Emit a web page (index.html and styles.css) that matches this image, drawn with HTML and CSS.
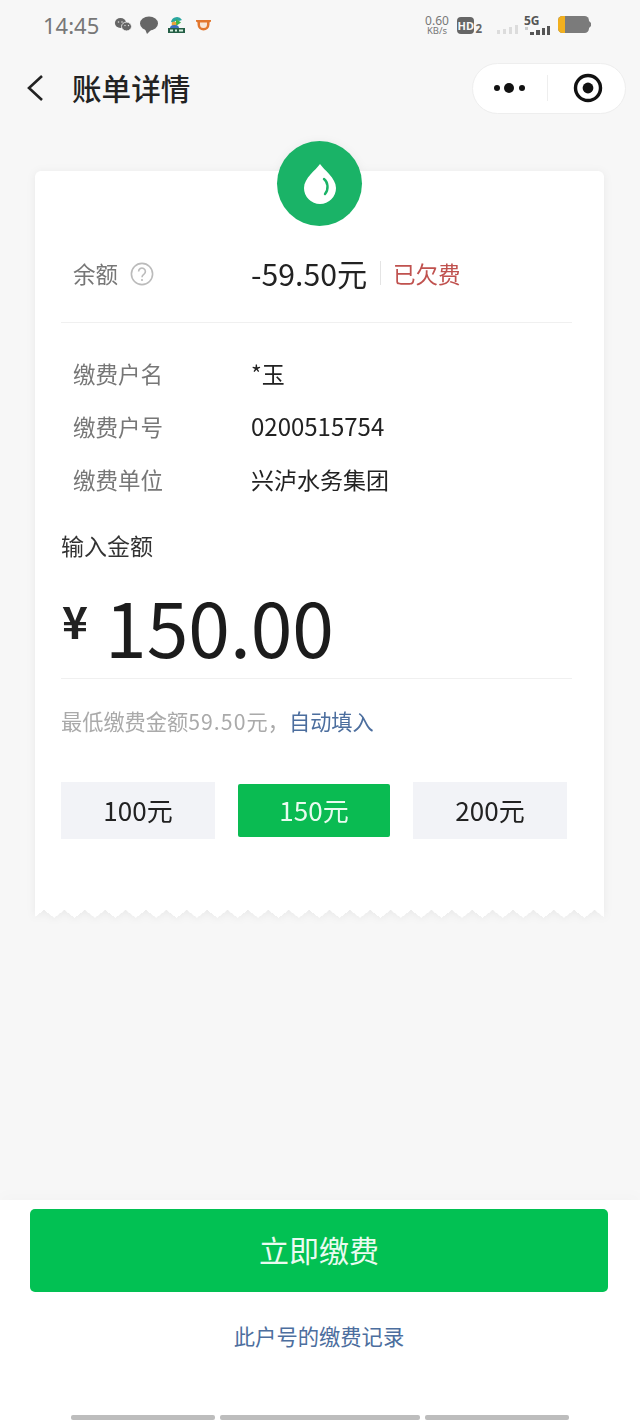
FILE: index.html

```html
<!DOCTYPE html>
<html lang="zh-CN">
<head>
  <meta charset="UTF-8">
  <meta name="viewport" content="width=device-width, initial-scale=1.0">
  <title>账单详情</title>
  <link rel="stylesheet" href="styles.css">
</head>
<body>
  <div class="statusbar">
    <div class="status-left">
      <span class="time">14:45</span>
      <svg class="notify" width="100" height="20" viewBox="0 0 100 20">
        <!-- wechat -->
        <ellipse cx="6.5" cy="8" rx="5.6" ry="5" fill="#666"/>
        <ellipse cx="12.5" cy="11.5" rx="5" ry="4.4" fill="#666" stroke="#f7f7f7" stroke-width=".8"/>
        <circle cx="4.5" cy="7" r=".8" fill="#ddd"/>
        <circle cx="8" cy="7" r=".8" fill="#ddd"/>
        <circle cx="11" cy="10.5" r=".7" fill="#ddd"/>
        <circle cx="14.5" cy="10.5" r=".7" fill="#ddd"/>
        <!-- chat bubble -->
        <ellipse cx="35" cy="8.5" rx="9" ry="7" fill="#666"/>
        <path d="M31 14l2 5 4-4z" fill="#666"/>
        <!-- video app -->
        <path d="M57 7a6 6 0 0 1 11-2l-3 1a3.500 3.500 0 0 0-5 2z" fill="#2aa6a0"/>
        <path d="M62 4l5 3.500-5 3.500z" fill="#3bb54a"/>
        <circle cx="60" cy="9" r="2.400" fill="#e8a33a"/>
        <path d="M56 13a4.500 3 0 0 1 9 0z" fill="#3a6fc0"/>
        <path d="M54 13h17v5H54z" fill="#245f46"/>
        <path d="M56 14.500h3v2h-3zM61 14.500h2v2h-2zM65 14.500h4v2h-4z" fill="#d8efe0"/>
        <!-- orange app -->
        <path d="M82 5h15v1.500l-1.500 1v2a6 6 0 0 1-12 0v-2l-1.500-1z" fill="#e2772f"/>
        <path d="M86 7.500h7v2a3.500 3.500 0 0 1-7 0z" fill="#f9e7d8"/>
      </svg>
    </div>
    <div class="status-right">
      <div class="speed"><span>0.60</span><span class="speed-unit">KB/s</span></div>
      <div class="hd"><span class="hd-box">HD</span><span class="hd-sub">2</span></div>
      <svg class="signal" width="22" height="9" viewBox="0 0 22 9">
        <path d="M0 5h3v4H0zM6 4h3v5H6zM12 2h3v7h-3zM18 0h3v9h-3z" fill="#dcdcdc"/>
      </svg>
      <div class="net">
        <span class="net-label">5G</span>
        <svg width="27" height="9" viewBox="0 0 27 9">
          <path d="M1 1h3v3H1z" fill="#ccc"/>
          <path d="M6 6h4v3H6zM12 4h4v5h-4zM18 2h3v7h-3zM23 0h3v9h-3z" fill="#555"/>
        </svg>
      </div>
      <svg class="battery" width="33" height="18" viewBox="0 0 33 18">
        <rect x="0" y="0" width="31" height="17" rx="4.500" fill="#7b7b7b"/>
        <path d="M4.500 0H7v17H4.500A4.500 4.500 0 0 1 0 12.500v-8A4.500 4.500 0 0 1 4.500 0z" fill="#f2b01e"/>
        <path d="M31 5l2 2v3l-2 2z" fill="#7b7b7b"/>
      </svg>
    </div>
  </div>

  <div class="navbar">
    <svg class="back" width="18" height="28" viewBox="0 0 18 28">
      <path d="M16 2L3 14l13 12" fill="none" stroke="#222" stroke-width="2.600"/>
    </svg>
    <h1 class="nav-title">账单详情</h1>
    <div class="capsule">
      <div class="capsule-item">
        <svg width="34" height="12" viewBox="0 0 34 12">
          <circle cx="4" cy="6" r="3" fill="#111"/>
          <circle cx="16" cy="6" r="5" fill="#111"/>
          <circle cx="29" cy="6" r="3" fill="#111"/>
        </svg>
      </div>
      <div class="capsule-item capsule-scan">
        <svg width="30" height="30" viewBox="0 0 30 30">
          <circle cx="15" cy="15" r="12.500" fill="none" stroke="#111" stroke-width="3.400"/>
          <circle cx="15" cy="15" r="5.400" fill="#111"/>
        </svg>
      </div>
    </div>
  </div>

  <div class="bill">
    <div class="bill-badge">
      <svg width="32" height="40" viewBox="0 0 32 40">
        <path d="M16 0C12 6 0 14 0 24a16 16 0 0 0 32 0C32 14 20 6 16 0z" fill="#fff"/>
        <path d="M20 15c4 3 5 10 1 15" fill="none" stroke="#1ab367" stroke-width="2.400" stroke-linecap="round"/>
      </svg>
    </div>
    <div class="bill-body">
      <div class="balance">
        <div class="label label-help">余额
          <svg class="help-icon" width="24" height="24" viewBox="0 0 24 24">
            <circle cx="12" cy="12" r="10.600" fill="none" stroke="#bbb" stroke-width="1.600"/>
            <path d="M8.600 9.400a3.400 3.400 0 1 1 5.400 2.800c-1.200.8-2 1.400-2 3" fill="none" stroke="#bbb" stroke-width="1.600"/>
            <circle cx="12" cy="18" r="1.100" fill="#bbb"/>
          </svg>
        </div>
        <div class="balance-value">-59.50元</div>
        <div class="balance-state">已欠费</div>
      </div>

      <div class="details">
        <div class="detail-row"><span class="label">缴费户名</span><span class="value">*玉</span></div>
        <div class="detail-row"><span class="label">缴费户号</span><span class="value value-num">0200515754</span></div>
        <div class="detail-row"><span class="label">缴费单位</span><span class="value">兴泸水务集团</span></div>
      </div>

      <div class="input-title">输入金额</div>
      <div class="amount">
        <span class="amount-yen">¥</span>
        <span class="amount-num">150.00</span>
      </div>
      <div class="hint">最低缴费金额<span class="hint-num">59.50</span>元，<span class="link">自动填入</span></div>

      <div class="chips">
        <div class="chip">100元</div>
        <div class="chip chip-on">150元</div>
        <div class="chip">200元</div>
      </div>
    </div>
    <div class="bill-edge"></div>
  </div>

  <div class="footer">
    <button class="pay-btn">立即缴费</button>
    <div class="record link">此户号的缴费记录</div>
    <div class="home-bars">
      <span class="home-bar"></span>
      <span class="home-bar home-bar-mid"></span>
      <span class="home-bar"></span>
    </div>
  </div>
</body>
</html>
```

FILE: styles.css

```css
* { box-sizing: border-box; }
html, body { height: 100%; }
body {
  margin: 0;
  height: 1422px;
  display: flex;
  flex-direction: column;
  background: #f7f7f7;
  color: #222;
  font-family: "Noto Sans CJK SC", "Noto Sans", sans-serif;
  overflow: hidden;
}

/* status bar */
.statusbar {
  height: 50px;
  padding: 0 49px 0 43px;
  display: flex;
  justify-content: space-between;
  align-items: center;
  color: #777;
}
.status-left { display: flex; align-items: center; gap: 15px; }
.time { font-family: "Noto Sans", sans-serif; font-size: 22px; }
.notify { display: block; }
.status-right { display: flex; align-items: center; }
.speed {
  width: 24px;
  display: flex;
  flex-direction: column;
  align-items: center;
  font-size: 12px;
  line-height: 11px;
  color: #777;
  font-family: "Noto Sans", sans-serif;
}
.speed-unit { font-size: 9.5px; line-height: 9px; }
.hd { width: 25px; margin-left: 8px; display: flex; align-items: flex-end; }
.hd-box {
  width: 18px;
  height: 17px;
  background: #666;
  color: #f7f7f7;
  border-radius: 4px;
  font-size: 11px;
  line-height: 17px;
  font-weight: 700;
  text-align: center;
  font-family: "Noto Sans", sans-serif;
}
.hd-sub { font-size: 11.5px; line-height: 11px; font-weight: 700; color: #666; margin-left: 1px; font-family: "Noto Sans", sans-serif; }
.signal { margin: 9px 0 0 15px; }
.net { width: 27px; margin-left: 5px; display: flex; flex-direction: column; align-items: flex-start; }
.net-label { font-size: 12px; line-height: 10px; font-weight: 700; color: #555; font-family: "Noto Sans", sans-serif; }
.battery { margin-left: 7px; }

/* nav */
.navbar {
  height: 76px;
  padding: 0 14px 0 26px;
  display: flex;
  align-items: center;
}
.nav-title { margin: -2px 0 0 28px; font-size: 29.6px; font-weight: 500; color: #222; }
.capsule {
  margin-left: auto;
  width: 154px;
  height: 51px;
  display: flex;
  align-items: center;
  background: #fff;
  border: 1px solid #eee;
  border-radius: 26px;
}
.capsule-item { flex: 1; display: flex; justify-content: center; align-items: center; }
.capsule-scan { height: 26px; padding-left: 3px; border-left: 1px solid #eee; }

/* bill card */
.bill {
  position: relative;
  margin: 45px 36px 0 35px;
  filter: drop-shadow(0 1px 4px rgba(0, 0, 0, 0.06));
}
.bill-badge {
  position: absolute;
  left: 242px;
  top: -30px;
  width: 85px;
  height: 85px;
  border-radius: 50%;
  background: #1ab367;
  display: flex;
  align-items: center;
  justify-content: center;
}
.bill-body {
  background: #fff;
  border-radius: 6px 6px 0 0;
  padding: 77px 32px 71px 26px;
}
/* receipt teeth along the bottom */
.bill-edge {
  height: 8px;
  background: conic-gradient(from -51.5deg at 50% 100%, #fff 103deg, transparent 0) 9px 0 / 20.4px 8px repeat-x;
}

.label { color: #777; font-size: 22.5px; width: 178px; flex-shrink: 0; }
.balance {
  height: 75px;
  padding: 0 0 25px 12px;
  display: flex;
  align-items: center;
  border-bottom: 1px solid #f0f0f0;
}
.label-help { display: flex; align-items: center; gap: 12px; }
.help-icon { margin-top: 3px; }
.balance-value { font-size: 30.2px; color: #222; }
.balance-state {
  margin-left: 13px;
  padding-left: 12px;
  border-left: 1px solid #e4e4e4;
  font-size: 22.5px;
  line-height: 24px;
  color: #c0524f;
}

.details { padding: 23px 0 0 12px; }
.detail-row { height: 53px; display: flex; align-items: center; }
.value { font-size: 23px; color: #222; }
.value-num { font-size: 24px; }

.input-title { margin-top: 24px; font-size: 23px; line-height: 32px; color: #333; }
.amount {
  height: 118px;
  padding-top: 12px;
  display: flex;
  align-items: center;
  border-bottom: 1px solid #f0f0f0;
}
.amount-yen { font-size: 44px; font-weight: 700; width: 43px; color: #222; margin: -12px 0 0 1px; }
.amount-num { font-size: 75px; line-height: 1; color: #1c1c1c; }

.hint { margin-top: 27px; font-size: 21.2px; line-height: 30px; color: #aaa; white-space: nowrap; }
.hint-num { letter-spacing: 1.1px; }
.link { color: #4c6e9e; }

.chips { margin-top: 46px; display: flex; align-items: center; gap: 23px; }
.chip {
  width: 154px;
  height: 57px;
  background: #f2f3f7;
  text-align: center;
  font-size: 26px;
  line-height: 55px;
  color: #222;
}
.chip-on {
  width: 152px;
  height: 53px;
  line-height: 51px;
  background: #0abb52;
  color: #e9fbef;
  border-radius: 2px;
}

/* footer */
.footer {
  margin-top: auto;
  height: 222px;
  padding: 9px 32px 0 30px;
  background: #fff;
  box-shadow: 0 -6px 12px rgba(0, 0, 0, 0.015);
  display: flex;
  flex-direction: column;
}
.pay-btn {
  height: 83px;
  padding: 0 0 4px;
  border: none;
  border-radius: 5px;
  background: #02c153;
  color: #eafbf0;
  font-family: inherit;
  font-size: 30px;
}
.record { margin-top: 28px; text-align: center; font-size: 21.3px; line-height: 32px; }
.home-bars {
  margin: 63px 0 0 41px;
  display: flex;
  gap: 5px;
}
.home-bar { width: 144px; height: 5px; background: #bdbdbd; border-radius: 2px; }
.home-bar-mid { width: 200px; }
```
